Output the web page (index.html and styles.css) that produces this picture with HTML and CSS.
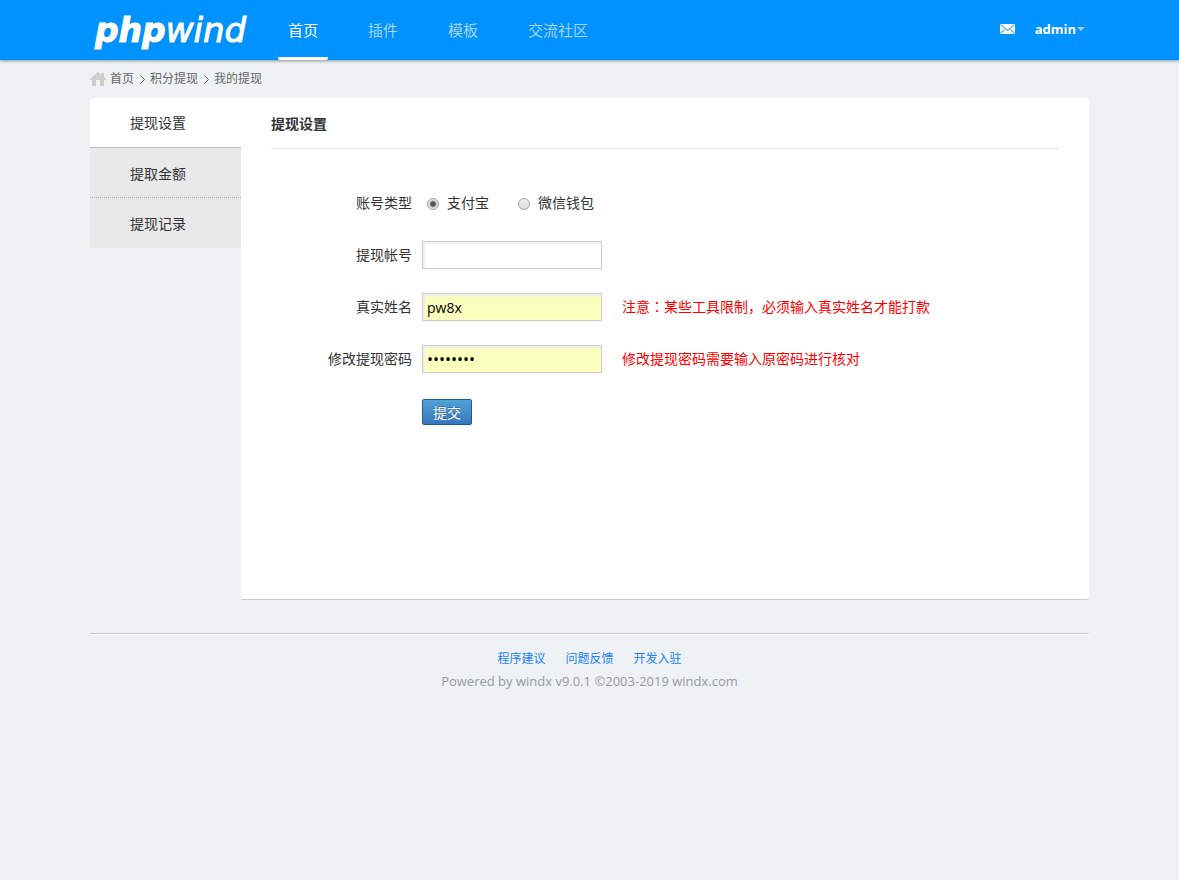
FILE: index.html
```html
<!DOCTYPE html>
<html lang="zh-CN">
<head>
<meta charset="utf-8">
<title>提现设置 - phpwind</title>
<link rel="stylesheet" href="styles.css">
</head>
<body>
<header class="header">
  <div class="wrap header-inner">
    <a class="logo" href="#"><b>php</b>wind</a>
    <nav class="nav">
      <a class="nav-link current" href="#">首页</a>
      <a class="nav-link" href="#">插件</a>
      <a class="nav-link" href="#">模板</a>
      <a class="nav-link" href="#">交流社区</a>
    </nav>
    <div class="user">
      <a class="mail" href="#" aria-label="消息">
        <svg width="15" height="10" viewBox="0 0 15 10"><path fill="#fff" d="M0 0h15v10H0z"/><path fill="none" stroke="#5cb0ef" stroke-width="1.2" d="M.5.5l7 6 7-6M.5 9.5l4-4M14.5 9.5l-4-4"/></svg>
      </a>
      <a class="account" href="#">admin<svg width="8" height="4" viewBox="0 0 8 4"><path fill="#a9cdea" d="M0 0h8L4 4z"/></svg></a>
    </div>
  </div>
</header>
<div class="wrap">
  <nav class="crumbs">
    <svg class="home" width="16" height="14" viewBox="0 0 16 14"><path fill="#cecece" d="M8 0l3 2.600V1h3v4.200L16 7v1h-2v6h-4V8H6v6H2V8H0V7z"/></svg>
    <a href="#">首页</a>
    <svg class="arrow" width="5" height="9" viewBox="0 0 5 9"><path fill="none" stroke="#666" d="M.5.5l4 4-4 4"/></svg>
    <a href="#">积分提现</a>
    <svg class="arrow" width="5" height="9" viewBox="0 0 5 9"><path fill="none" stroke="#666" d="M.5.5l4 4-4 4"/></svg>
    <a href="#">我的提现</a>
  </nav>
  <div class="layout">
    <nav class="side">
      <a class="side-link current" href="#">提现设置</a>
      <a class="side-link" href="#">提取金额</a>
      <a class="side-link" href="#">提现记录</a>
    </nav>
    <main class="main">
      <h1 class="title">提现设置</h1>
      <form class="form">
        <div class="row" role="radiogroup" aria-labelledby="type-label">
          <span class="label" id="type-label">账号类型</span>
          <div class="choices">
            <label class="choice"><input class="radio" type="radio" name="type" checked>支付宝</label>
            <label class="choice"><input class="radio" type="radio" name="type">微信钱包</label>
          </div>
        </div>
        <div class="row">
          <label class="label" for="account">提现帐号</label>
          <input class="input" id="account" type="text">
        </div>
        <div class="row">
          <label class="label" for="realname">真实姓名</label>
          <input class="input filled" id="realname" type="text" value="pw8x">
          <span class="tip">注意<span class="colon" lang="zh-TW">：</span>某些工具限制，必须输入真实姓名才能打款</span>
        </div>
        <div class="row">
          <label class="label" for="password">修改提现密码</label>
          <input class="input filled password" id="password" type="password" value="12345678">
          <span class="tip">修改提现密码需要输入原密码进行核对</span>
        </div>
        <div class="row submit-row">
          <button class="submit" type="button">提交</button>
        </div>
      </form>
    </main>
  </div>
  <footer class="footer">
    <div class="footer-links"><a href="#">程序建议</a><a href="#">问题反馈</a><a href="#">开发入驻</a></div>
    <p class="powered">Powered by windx v9.0.1 ©2003-2019 windx.com</p>
  </footer>
</div>
</body>
</html>
```
FILE: styles.css
```css
* {
  box-sizing: border-box;
}
body {
  margin: 0;
  background: #eef2f5;
  color: #333;
  font: 14px/20px "Open Sans", "Noto Sans CJK SC", sans-serif;
}
a {
  color: inherit;
  text-decoration: none;
}
svg {
  display: block;
}
.wrap {
  max-width: 999px;
  margin: 0 auto;
}
.header {
  background: #0092ff;
  box-shadow: 0 1px 3px rgba(0, 0, 0, .4);
}
.header-inner {
  display: flex;
  height: 60px;
}
.logo {
  flex: 0 0 188px;
  padding-left: 5px;
  color: #fff;
  font-family: "DejaVu Sans", sans-serif;
  font-size: 34px;
  font-style: italic;
  line-height: 60px;
  white-space: nowrap;
  text-shadow: 0 1px 1px rgba(0, 60, 120, .4);
  -webkit-text-stroke: 1px #fff;
}
.logo b {
  font-size: 33px;
}
.nav {
  display: flex;
  gap: 30px;
}
.nav-link {
  padding: 0 10px;
  border-bottom: 3px solid transparent;
  color: #a6d5fb;
  font-size: 15px;
  line-height: 60px;
}
.nav-link.current {
  border-color: #fff;
  border-radius: 2px;
  color: #fff;
}
.user {
  display: flex;
  align-items: center;
  gap: 20px;
  margin-left: auto;
  padding: 0 4px 2px 0;
}
.account {
  display: flex;
  align-items: center;
  gap: 1px;
  color: #fff;
  font-size: 13px;
  font-weight: 700;
}
.crumbs {
  display: flex;
  align-items: center;
  gap: 4px;
  height: 38px;
  color: #666;
  font-size: 12px;
}
.arrow {
  margin: 0 1px 0 2px;
}
.layout {
  display: flex;
  align-items: flex-start;
}
.side {
  flex: 0 0 151px;
  border-radius: 3px 0 0 0;
}
.side-link {
  display: block;
  height: 49px;
  padding-left: 40px;
  background: #e9e9e9;
  line-height: 51px;
}
.side-link + .side-link + .side-link {
  height: 51px;
  border-top: 1px dotted #aaa;
}
.side-link.current {
  height: 50px;
  background: #fff;
  border-bottom: 1px solid #bbb;
  border-radius: 3px 0 0 0;
  line-height: 49px;
}
.main {
  flex: 1;
  min-height: 502px;
  padding: 0 30px;
  background: #fff;
  border-bottom: 1px solid #ccc;
  border-radius: 0 3px 3px 0;
}
.title {
  height: 51px;
  margin: 0;
  border-bottom: 1px solid #e4e4e4;
  font-size: 14px;
  font-weight: 700;
  line-height: 51px;
}
.form {
  display: grid;
  gap: 24px;
  padding-top: 40px;
}
.row {
  display: flex;
  align-items: center;
  min-height: 28px;
}
.label {
  flex: 0 0 141px;
  margin-right: 10px;
  text-align: right;
}
.choices {
  display: flex;
  gap: 29px;
}
.choice {
  display: flex;
  align-items: center;
}
.radio {
  appearance: none;
  width: 12px;
  height: 12px;
  margin: 2px 8px 0 5px;
  border: 1px solid #a3a3a3;
  border-radius: 50%;
  background: linear-gradient(#eee, #ddd);
}
.choice + .choice .radio {
  margin-left: 0;
}
.radio:checked {
  background: radial-gradient(circle, #555 0 2px, #e6e6e6 4px);
}
.input {
  width: 180px;
  height: 28px;
  padding: 0 4px;
  border: 1px solid #ccc;
  background: #fff;
  box-shadow: inset 2px 2px 2px #eee;
  color: #000;
  font: 14px/20px "Open Sans", "Noto Sans CJK SC", sans-serif;
}
.input.filled {
  background: #faffbd;
}
.input.password {
  font-size: 16px;
}
.tip {
  margin-left: 20px;
  color: #f00;
}
.colon {
  font-family: "Noto Sans CJK TC", sans-serif;
  line-height: 1;
}
.submit-row {
  align-items: flex-end;
  padding-left: 151px;
}
.submit {
  width: 50px;
  height: 26px;
  padding: 0 0 1px;
  border: 1px solid #106095;
  border-radius: 2px;
  background: linear-gradient(#4fa3d5, #3a75c0);
  color: #fff;
  font: 14px/20px "Noto Sans CJK SC", sans-serif;
  text-shadow: 0 -1px 0 rgba(0, 0, 0, .25);
}
.footer {
  margin-top: 33px;
  padding-top: 13px;
  border-top: 1px solid #ccc;
  box-shadow: inset 0 1px 0 #fff;
  color: #999;
  font-size: 12px;
  line-height: 23px;
  text-align: center;
}
.footer-links {
  display: flex;
  justify-content: center;
  gap: 20px;
  color: #2080ff;
}
.powered {
  margin: 0;
  font-size: 13px;
}
```
